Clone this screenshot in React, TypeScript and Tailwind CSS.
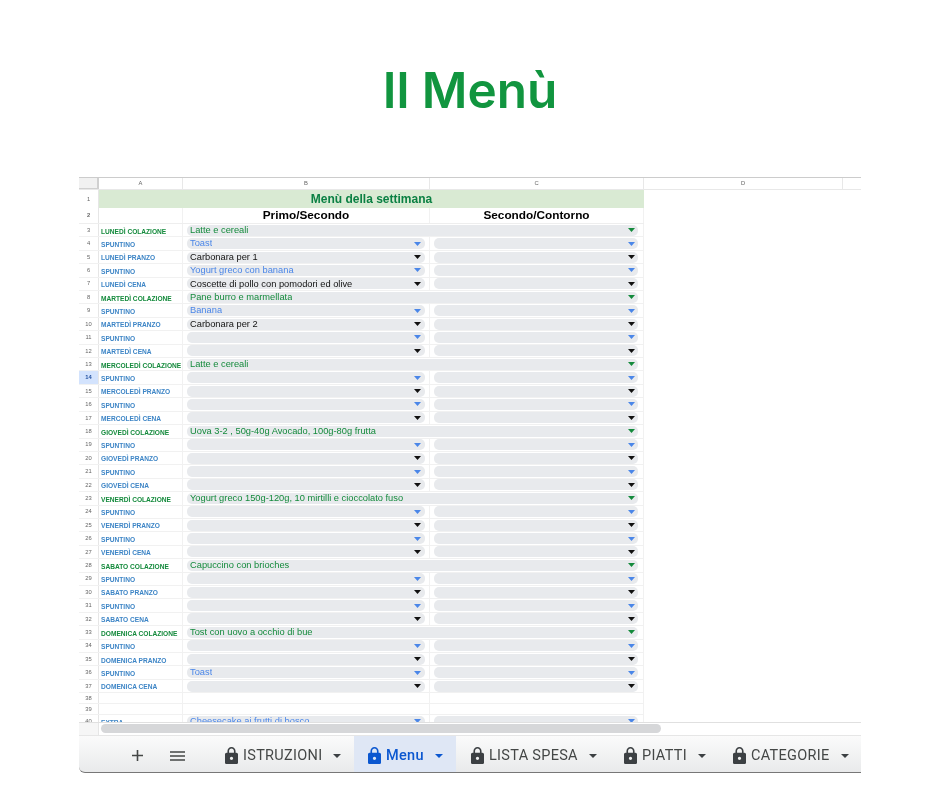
const GREEN = "#148a3c";
const BLUE = "#4a86e8";
const BLACK = "#111111";

type Row = { n: number; label?: string; value?: string; kind?: "full" | "blue" | "black" };

const days = ["LUNEDÌ", "MARTEDÌ", "MERCOLEDÌ", "GIOVEDÌ", "VENERDÌ", "SABATO", "DOMENICA"];

const filled: Record<number, string> = {
  3: "Latte e cereali",
  4: "Toast",
  5: "Carbonara per 1",
  6: "Yogurt greco con banana",
  7: "Coscette di pollo con pomodori ed olive",
  8: "Pane burro e marmellata",
  9: "Banana",
  10: "Carbonara per 2",
  13: "Latte e cereali",
  18: "Uova 3-2 , 50g-40g Avocado, 100g-80g frutta",
  23: "Yogurt greco 150g-120g, 10 mirtilli e cioccolato fuso",
  28: "Capuccino con brioches",
  33: "Tost con uovo a occhio di bue",
  36: "Toast",
};

const rows: Row[] = [];
days.forEach((day, d) => {
  const start = 3 + d * 5;
  const names = [`${day} COLAZIONE`, "SPUNTINO", `${day} PRANZO`, "SPUNTINO", `${day} CENA`];
  names.forEach((label, i) => {
    const n = start + i;
    const kind = i === 0 ? "full" : i % 2 === 1 ? "blue" : "black";
    rows.push({ n, label, value: filled[n], kind });
  });
});

const Caret = ({ color }: { color: string }) => (
  <svg width="7" height="4" viewBox="0 0 7 4" className="shrink-0">
    <path d="M0 0h7L3.5 4z" fill={color} />
  </svg>
);

const Lock = ({ color = "#3c4043" }: { color?: string }) => (
  <svg width="13" height="17" viewBox="4 1 16 21" preserveAspectRatio="none" className="shrink-0">
    <path
      fill={color}
      d="M18 8h-1V6c0-2.76-2.24-5-5-5S7 3.24 7 6v2H6c-1.1 0-2 .9-2 2v10c0 1.1.9 2 2 2h12c1.1 0 2-.9 2-2V10c0-1.1-.9-2-2-2zm-6 9c-1.1 0-2-.9-2-2s.9-2 2-2 2 .9 2 2-.9 2-2 2zM9 8V6c0-1.66 1.34-3 3-3s3 1.34 3 3v2H9z"
    />
  </svg>
);

const Pill = ({ value, color, side }: { value?: string; color: string; side: "b" | "c" }) => (
  <div
    className={`ml-[4px] flex h-[11px] items-center justify-between rounded-[5px] bg-[#e8eaed] pl-[3px] ${
      side === "b" ? "mr-[4px] pr-[4px]" : "mr-[5px] pr-[3px]"
    }`}
  >
    <span className="truncate pt-[1px] text-[9.3px] leading-none" style={{ color }}>
      {value}
    </span>
    <Caret color={color} />
  </div>
);

const NumCell = ({ n, active }: { n: number; active?: boolean }) => (
  <div
    className={`flex items-center justify-center border-r border-[#e6e6e6] text-[5.8px] ${
      active ? "bg-[#d3e3fd] font-bold text-[#1f4e9e]" : "text-[#666]"
    }`}
  >
    {n}
  </div>
);

const SheetRow = ({ row }: { row: Row }) => {
  const color = row.kind === "full" ? GREEN : row.kind === "blue" ? BLUE : BLACK;
  const labelColor = row.kind === "full" ? "#148a3c" : "#3d85c6";
  return (
    <div className="grid h-[13.41px] w-[565px] shrink-0 grid-cols-[20px_84px_247px_214px] items-stretch border-b border-[#f1f1f1]">
      <NumCell n={row.n} active={row.n === 14} />
      <div
        className="flex items-end overflow-hidden whitespace-nowrap border-r border-[#f1f1f1] pl-[2px] text-[6.6px] font-bold"
        style={{ color: labelColor }}
      >
        {row.label}
      </div>
      {row.kind === "full" ? (
        <div className="col-span-2 flex items-center border-r border-[#f1f1f1]">
          <div className="w-full">
            <Pill value={row.value} color={color} side="c" />
          </div>
        </div>
      ) : (
        <>
          <div className="flex items-center border-r border-[#f1f1f1]">
            <div className="w-full">
              <Pill value={row.value} color={color} side="b" />
            </div>
          </div>
          <div className="flex items-center border-r border-[#f1f1f1]">
            <div className="w-full">
              <Pill color={color} side="c" />
            </div>
          </div>
        </>
      )}
    </div>
  );
};

const EmptyRow = ({ n }: { n: number }) => (
  <div className="grid h-[11px] w-[565px] shrink-0 grid-cols-[20px_84px_247px_214px] border-b border-[#f1f1f1]">
    <NumCell n={n} />
    <div className="border-r border-[#f1f1f1]" />
    <div className="border-r border-[#f1f1f1]" />
    <div className="border-r border-[#f1f1f1]" />
  </div>
);

const tabs = [
  { name: "ISTRUZIONI", active: false, box: "w-[142px] pl-[13px]" },
  { name: "Menu", active: true, box: "w-[102px] pl-[14px]" },
  { name: "LISTA SPESA", active: false, box: "w-[155px] pl-[15px]" },
  { name: "PIATTI", active: false, box: "w-[109px] pl-[13px]" },
  { name: "CATEGORIE", active: false, box: "w-[141px] pl-[13px]" },
];

export default function App() {
  return (
    <div className="h-[788px] w-[940px] overflow-hidden bg-white font-['Liberation_Sans',sans-serif]">
      <h1 className="flex h-[177px] justify-center pt-[58px] font-['Inter',sans-serif] text-[49.5px] font-semibold leading-[64px] text-[#11953f]">
        Il Menù
      </h1>

      <div className="ml-[79px] w-[782px] blur-[0.3px]">
        {/* column letters */}
        <div className="grid h-[13px] grid-cols-[20px_84px_247px_214px_199px_1fr] border-b border-t border-b-[#e8e8e8] border-t-[#cccccc] text-center text-[5.8px] leading-[11px] text-[#666]">
          <div className="border-b border-r-2 border-[#d0d0d0] bg-[#f1f1f1]" />
          <div className="border-r border-[#e8e8e8]">A</div>
          <div className="border-r border-[#e8e8e8]">B</div>
          <div className="border-r border-[#e8e8e8]">C</div>
          <div className="border-r border-[#e8e8e8]">D</div>
          <div />
        </div>

        <div className="flex h-[532px] flex-col overflow-hidden">
          <div className="grid h-[18px] shrink-0 grid-cols-[20px_545px]">
            <NumCell n={1} />
            <div className="bg-[#d9ead3] text-center text-[12px] font-bold leading-[18px] text-[#0b8043]">
              Menù della settimana
            </div>
          </div>
          <div className="grid h-[16px] w-[565px] shrink-0 grid-cols-[20px_84px_247px_214px] border-b border-[#eeeeee] text-center text-[11.8px] font-bold leading-[15px] text-black">
            <NumCell n={2} />
            <div className="border-r border-[#f1f1f1]" />
            <div className="border-r border-[#f1f1f1]">Primo/Secondo</div>
            <div className="border-r border-[#f1f1f1]">Secondo/Contorno</div>
          </div>
          {rows.map((row) => (
            <SheetRow key={row.n} row={row} />
          ))}
          <EmptyRow n={38} />
          <EmptyRow n={39} />
          <SheetRow row={{ n: 40, label: "EXTRA", value: "Cheesecake ai frutti di bosco", kind: "blue" }} />
        </div>

        {/* scrollbar */}
        <div className="flex h-[13px] border-t border-[#e0e0e0]">
          <div className="w-[20px] border-r border-[#e6e6e6] bg-[#f6f6f6]" />
          <div className="ml-[2px] mt-[1px] h-[9px] w-[560px] rounded-full bg-[#d6d7d9]" />
        </div>

        {/* sheet tabs */}
        <div className="flex h-[38px] items-stretch overflow-hidden rounded-bl-[6px] border-b border-t border-b-[#777777] border-t-[#e6e6e6] bg-gradient-to-b from-[#fbfbfb] to-[#e9eaeb] font-['Roboto',sans-serif] text-[14.5px] tracking-[0.3px] text-[#444746]">
          <div className="flex w-[133px] items-center pl-[53px] pt-[3px]">
            <svg width="11" height="11" viewBox="0 0 11 11" className="shrink-0">
              <path d="M5.5 0v11M0 5.5h11" stroke="#444746" strokeWidth="1.6" />
            </svg>
            <svg width="15" height="10" viewBox="0 0 15 10" className="ml-[27px] shrink-0">
              <path d="M0 1h15M0 5h15M0 9h15" stroke="#444746" strokeWidth="1.5" />
            </svg>
          </div>
          {tabs.map((tab) => (
            <div
              key={tab.name}
              className={`flex shrink-0 items-center pt-[3px] ${tab.box} ${
                tab.active ? "bg-[#dfe7f5] font-medium text-[#0b57d0]" : ""
              }`}
            >
              <Lock color={tab.active ? "#0b57d0" : "#3c4043"} />
              <span className="ml-[5px]">{tab.name}</span>
              <svg width="8" height="4" viewBox="0 0 8 4" className="ml-[11px] shrink-0">
                <path d="M0 0h8L4 4z" fill={tab.active ? "#0b57d0" : "#3c4043"} />
              </svg>
            </div>
          ))}
        </div>
      </div>
    </div>
  );
}
